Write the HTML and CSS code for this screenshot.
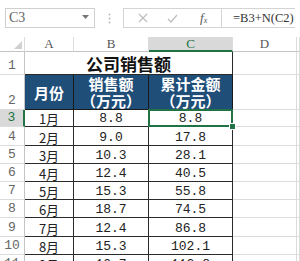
FILE: index.html
```html
<!DOCTYPE html>
<html lang="zh-CN">
<head>
    <meta charset="UTF-8">
    <title>公司销售额</title>
    <link rel="stylesheet" href="styles.css">
</head>
<body>
    <div class="formula-bar">
        <div class="name-box">
            <span>C3</span>
            <svg class="arrow" width="7" height="4" viewBox="0 0 7 4"><path d="M0 0 L7 0 L3.5 4 Z" fill="#777"/></svg>
        </div>
        <div class="dots">
            <svg width="3" height="11" viewBox="0 0 3 11"><circle cx="1.5" cy="1.5" r="1" fill="#bbb"/><circle cx="1.5" cy="5.5" r="1" fill="#bbb"/><circle cx="1.5" cy="9.5" r="1" fill="#bbb"/></svg>
        </div>
        <div class="input-wrap">
            <div class="tools">
                <svg class="tool" width="10" height="10" viewBox="0 0 10 10"><path d="M1 1 L9 9 M9 1 L1 9" stroke="#bdbdbd" stroke-width="1.2"/></svg>
                <svg class="tool" width="11" height="9" viewBox="0 0 11 9"><path d="M1 5 L4 8 L10 1" stroke="#bdbdbd" stroke-width="1.2" fill="none"/></svg>
                <span class="fx">f<sub>x</sub></span>
            </div>
            <div class="formula">=B3+N(C2)</div>
        </div>
    </div>

    <div class="sheet">
        <div class="corner"><svg width="8" height="8" viewBox="0 0 8 8"><path d="M8 0 L8 8 L0 8 Z" fill="#d0d0d0"/></svg></div>
        <div class="col-hd">A</div>
        <div class="col-hd">B</div>
        <div class="col-hd sel">C</div>
        <div class="col-hd">D</div>
        <div class="col-hd"></div>

        <div class="row-hd">1</div>
        <div class="cell title">公司销售额</div>
        <div class="cell"></div>
        <div class="cell"></div>

        <div class="row-hd">2</div>
        <div class="cell head first"><span>月份</span></div>
        <div class="cell head"><span>销售额<br>（万元）</span></div>
        <div class="cell head"><span>累计金额<br>（万元）</span></div>
        <div class="cell"></div>
        <div class="cell"></div>
    </div>

    <script>
        const rows = [
            ['1月', '8.8', '8.8'],
            ['2月', '9.0', '17.8'],
            ['3月', '10.3', '28.1'],
            ['4月', '12.4', '40.5'],
            ['5月', '15.3', '55.8'],
            ['6月', '18.7', '74.5'],
            ['7月', '12.4', '86.8'],
            ['8月', '15.3', '102.1'],
            ['9月', '10.7', '112.8']
        ];

        const sheet = document.querySelector('.sheet');
        rows.forEach((r, i) => {
            const n = i + 3;
            const selRow = n === 3 ? ' sel' : '';
            const selCell = n === 3 ? ' active' : '';
            sheet.insertAdjacentHTML('beforeend', `
                <div class="row-hd${selRow}">${n}</div>
                <div class="cell data first">${r[0]}</div>
                <div class="cell data num">${r[1]}</div>
                <div class="cell data num${selCell}">${r[2]}</div>
                <div class="cell"></div>
                <div class="cell"></div>
            `);
        });
    </script>
</body>
</html>
```

FILE: styles.css
```css
body {
    margin: 0;
    background: #fff;
    font-family: "Liberation Sans", "Noto Sans CJK SC", sans-serif;
    width: 300px;
    height: 261px;
    overflow: hidden;
}
.formula-bar {
    display: flex;
    align-items: flex-start;
    height: 37px;
    padding: 8px 0 0 5px;
    box-sizing: border-box;
}
.name-box {
    width: 90px;
    height: 20px;
    border: 1px solid #cfcfcf;
    box-sizing: border-box;
    display: flex;
    align-items: center;
    justify-content: space-between;
    padding: 0 5px 0 3px;
    font-family: "Liberation Serif", serif;
    font-size: 14px;
    color: #666;
}
.arrow {
    margin-top: -2px;
}
.dots {
    width: 28px;
    height: 20px;
    display: flex;
    align-items: center;
    justify-content: center;
}
.input-wrap {
    width: 172px;
    display: flex;
    height: 20px;
    border: 1px solid #d4d4d4;
    border-right: none;
    box-sizing: border-box;
    overflow: hidden;
}
.tools {
    width: 98px;
    flex-shrink: 0;
    display: flex;
    align-items: center;
    padding-left: 14px;
    gap: 19px;
    box-sizing: border-box;
    border-right: 1px solid #d4d4d4;
}
.fx {
    font-family: "Liberation Serif", serif;
    font-style: italic;
    font-size: 13px;
    color: #555;
    margin-left: 3px;
}
.fx sub {
    font-size: 8px;
    vertical-align: -1px;
}
.formula {
    padding-left: 11px;
    font-family: "Liberation Serif", serif;
    font-size: 12.5px;
    line-height: 18px;
    color: #333;
    white-space: nowrap;
}
.sheet {
    display: grid;
    grid-template-columns: 25px 49px 75px 84px 64px 3px;
    grid-template-rows: 15px 23px 35px 17px 19px 18px 18px 18px 18px 19px 18px 18px;
}
.sheet > div {
    box-sizing: border-box;
    border-right: 1px solid #dcdcdc;
    border-bottom: 1px solid #dcdcdc;
    display: flex;
    justify-content: center;
    align-items: center;
    overflow: hidden;
}
.corner {
    justify-content: flex-end !important;
    align-items: flex-end !important;
    padding: 0 2px 2px 0;
    border-bottom-color: #c4c4c4 !important;
}
.col-hd {
    font-family: "Liberation Serif", serif;
    font-size: 13px;
    color: #555;
    border-bottom-color: #c4c4c4 !important;
}
.col-hd.sel {
    background: #d9d9d9;
    color: #217346;
    border-bottom: 2px solid #217346 !important;
}
.row-hd {
    font-family: "Liberation Mono", monospace;
    font-size: 13px;
    color: #666;
    align-items: flex-end !important;
    padding-bottom: 1px;
    border-right-color: #c4c4c4 !important;
}
.row-hd.sel {
    background: #d9d9d9;
    color: #217346;
    border-right: 2px solid #217346 !important;
}
.cell.title {
    grid-column: 2 / 5;
    font-family: "Noto Sans CJK SC", sans-serif;
    font-weight: bold;
    font-size: 17px;
    color: #111;
    border-right-color: #2a2a2a;
    border-bottom-color: #2a2a2a;
}
.cell.head {
    background: #1f4e79;
    color: #fff;
    font-family: "Noto Sans CJK SC", sans-serif;
    font-weight: bold;
    font-size: 15px;
    line-height: 17px;
    text-align: center;
    border-right-color: #1a1a1a;
    border-bottom-color: #1a1a1a;
    overflow: visible;
}
.cell.data {
    font-family: "Liberation Mono", "Noto Sans CJK SC", monospace;
    font-size: 13px;
    line-height: 15px;
    color: #222;
    align-items: flex-end;
    border-right-color: #2a2a2a;
    border-bottom-color: #2a2a2a;
}
.cell.data.first {
    font-family: "Noto Sans CJK SC", sans-serif;
}
.cell.active {
    position: relative;
    overflow: visible !important;
}
.cell.active::after {
    content: "";
    position: absolute;
    left: -1px;
    top: -1px;
    right: -1px;
    bottom: -1px;
    border: 2px solid #217346;
}
.cell.active::before {
    content: "";
    position: absolute;
    right: -4px;
    bottom: -4px;
    width: 5px;
    height: 5px;
    background: #217346;
    border: 1px solid #fff;
    z-index: 2;
}
```
